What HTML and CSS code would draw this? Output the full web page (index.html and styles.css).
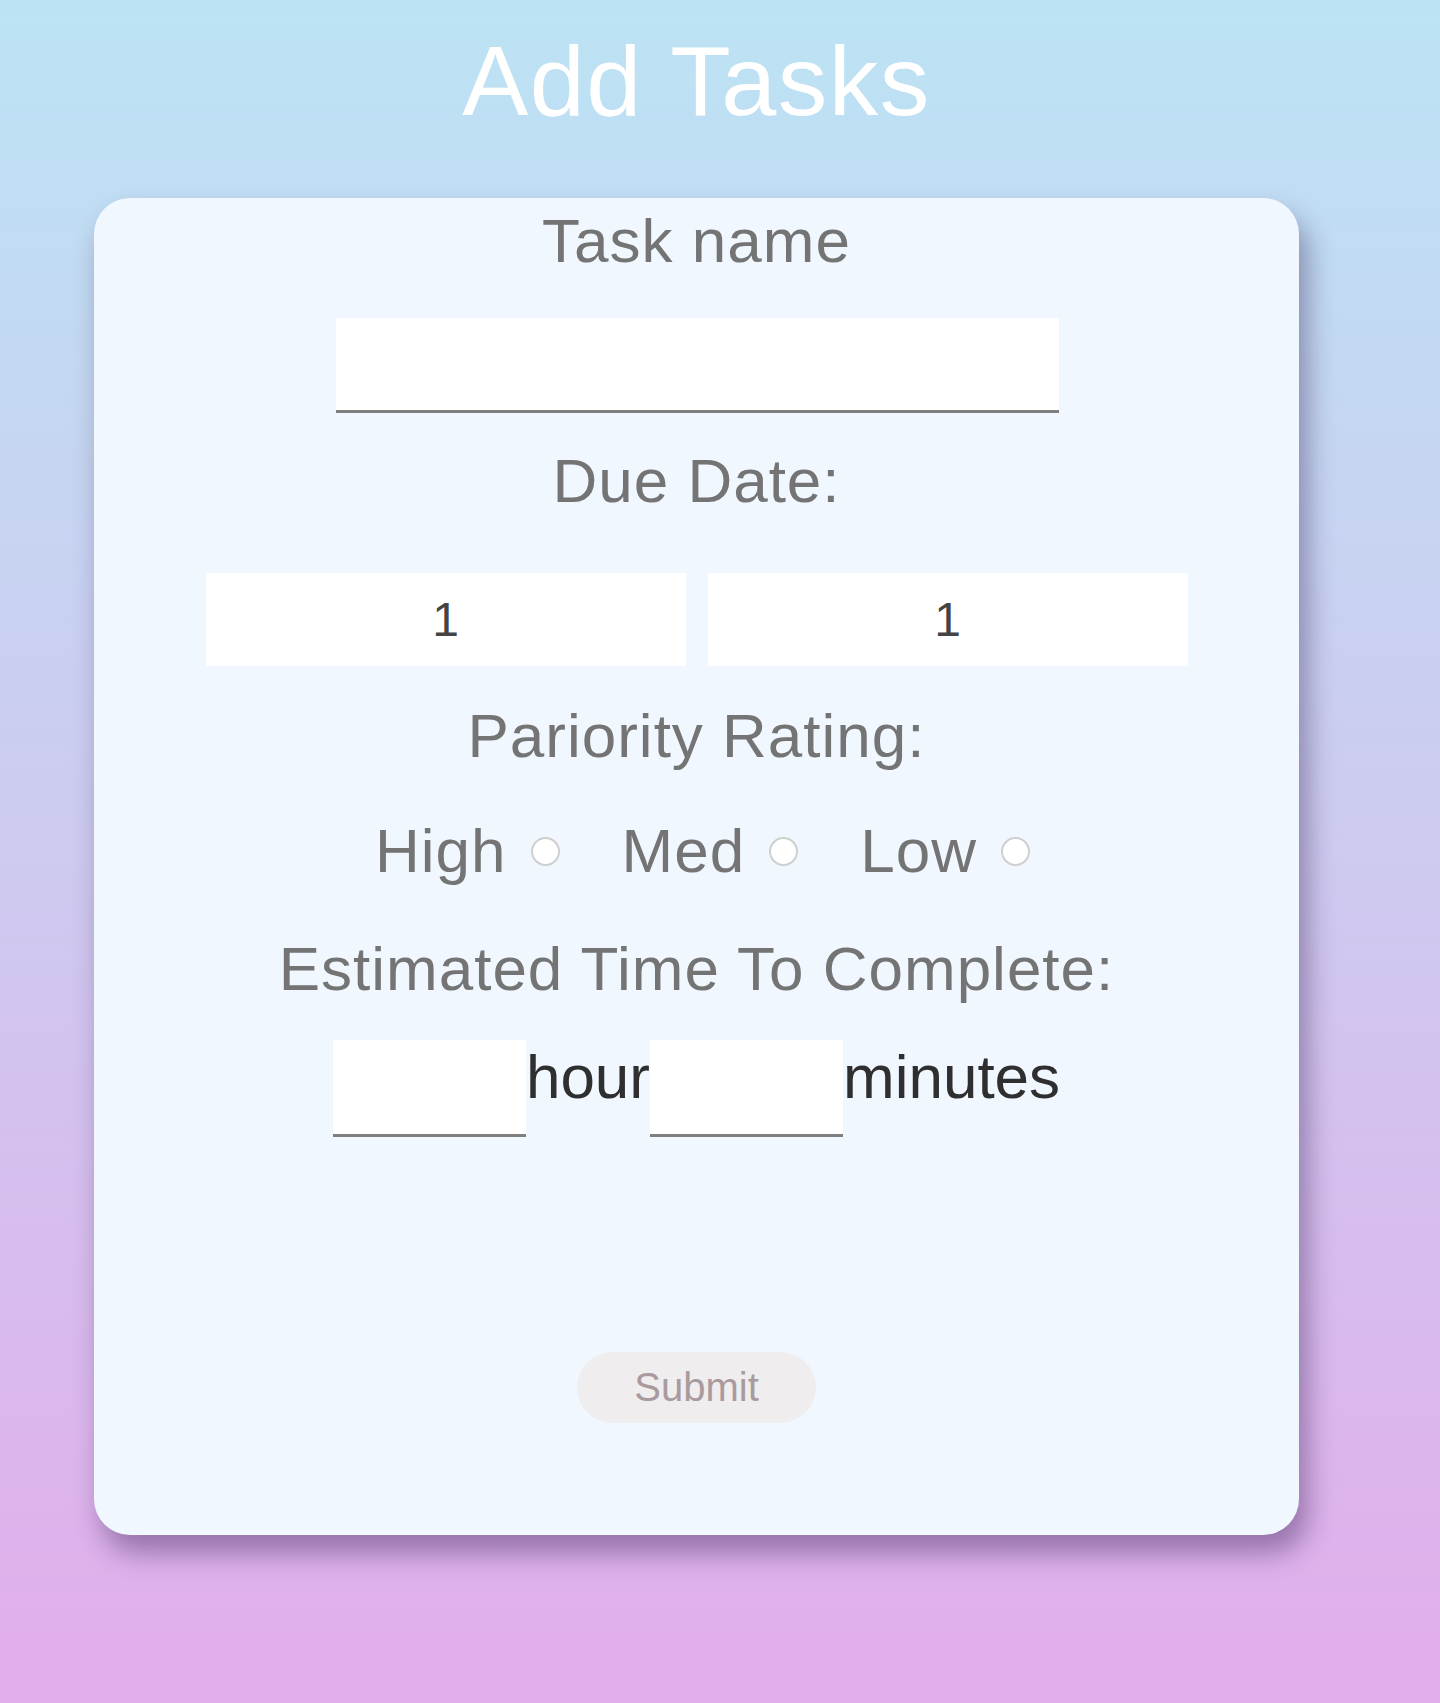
FILE: index.html
```html
<!DOCTYPE html>
<html lang="en">
<head>
<meta charset="utf-8">
<title>Add Tasks</title>
<link rel="stylesheet" href="styles.css">
</head>
<body>
<div class="page">
  <h1 class="title">Add Tasks</h1>
  <form class="card">
    <label class="label label-task" for="task">Task name</label>
    <input class="line-input task-input" id="task" type="text">
    <div class="label label-due">Due Date:</div>
    <div class="date-row">
      <input class="date-input" type="text" value="1">
      <input class="date-input" type="text" value="1">
    </div>
    <div class="label label-priority">Pariority Rating:</div>
    <div class="radio-row">
      <span class="radio-text">High</span><input class="radio" type="radio" name="p">
      <span class="radio-text">Med</span><input class="radio" type="radio" name="p">
      <span class="radio-text">Low</span><input class="radio" type="radio" name="p">
    </div>
    <div class="label label-time">Estimated Time To Complete:</div>
    <div class="time-row">
      <input class="line-input time-input" type="text"><span class="unit">hour</span><input class="line-input time-input" type="text"><span class="unit">minutes</span>
    </div>
    <button class="submit" type="button">Submit</button>
  </form>
</div>
</body>
</html>
```

FILE: styles.css
```css
html, body {
  margin: 0;
  padding: 0;
}

body {
  min-height: 1703px;
  background: linear-gradient(to bottom, #bce3f4 0%, #cdcbf0 48%, #e2adeb 100%);
  font-family: "Liberation Sans", Arial, sans-serif;
}

.page {
  width: 1393px;
  padding-top: 31px;
  padding-bottom: 40px;
}

.title {
  margin: 0;
  text-align: center;
  font-size: 99px;
  line-height: 100px;
  letter-spacing: 1.5px;
  font-weight: normal;
  color: #ffffff;
}

.card {
  box-sizing: border-box;
  width: 1205px;
  height: 1337px;
  margin: 67px auto 0;
  padding-top: 12px;
  background: #f0f7ff;
  border-radius: 36px;
  box-shadow: 8px 18px 28px rgba(40, 20, 70, 0.4);
  display: flex;
  flex-direction: column;
  align-items: center;
}

.label {
  display: block;
  font-size: 62px;
  line-height: 62px;
  letter-spacing: 1px;
  color: #747474;
  text-align: center;
}

.line-input {
  box-sizing: border-box;
  border: none;
  border-bottom: 3px solid #7f7f7f;
  background: #ffffff;
  outline: none;
  padding: 0;
  font-family: inherit;
}

.task-input {
  margin-top: 46px;
  width: 723px;
  height: 95px;
  margin-left: 2px;
}

.label-due {
  margin-top: 37px;
}

.date-row {
  margin-top: 61px;
  display: flex;
  gap: 22px;
}

.date-input {
  box-sizing: border-box;
  width: 480px;
  height: 93px;
  border: none;
  background: #ffffff;
  outline: none;
  padding: 0;
  text-align: center;
  font-family: inherit;
  font-size: 48px;
  color: #444444;
}

.label-priority {
  margin-top: 39px;
}

.radio-row {
  margin-top: 53px;
  display: flex;
  align-items: center;
  padding-left: 12px;
  height: 62px;
}

.radio-text {
  font-size: 62px;
  line-height: 62px;
  letter-spacing: 1px;
  color: #747474;
}

.radio {
  appearance: none;
  -webkit-appearance: none;
  box-sizing: border-box;
  width: 29px;
  height: 29px;
  margin: 0 0 0 24px;
  border: 2px solid #cfcfcf;
  border-radius: 50%;
  background: #ffffff;
}

.radio + .radio-text {
  margin-left: 62px;
}

.label-time {
  margin-top: 56px;
}

.time-row {
  margin-top: 40px;
  display: flex;
  align-items: flex-start;
}

.time-input {
  width: 193px;
  height: 97px;
}

.unit {
  margin-top: 6px;
  font-size: 62px;
  line-height: 62px;
  color: #2f2f2f;
}

.submit {
  margin-top: 215px;
  width: 239px;
  height: 71px;
  border: none;
  border-radius: 36px;
  background: #efedee;
  color: #a99a9e;
  font-family: inherit;
  font-size: 40px;
  padding: 0;
  cursor: pointer;
}
```
